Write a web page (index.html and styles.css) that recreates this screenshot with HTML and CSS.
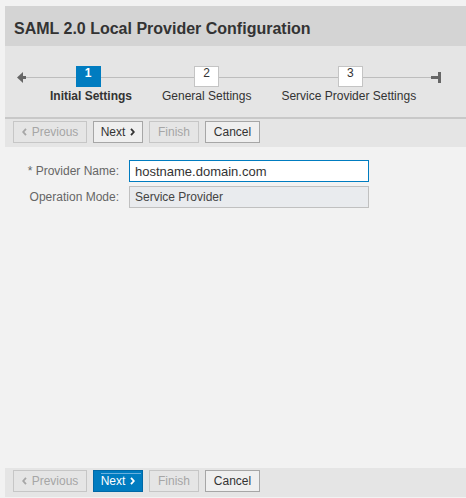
FILE: index.html
```html
<!DOCTYPE html>
<html lang="en">
<head>
<meta charset="utf-8">
<title>SAML 2.0 Local Provider Configuration</title>
<link rel="stylesheet" href="styles.css">
</head>
<body>
<div class="panel">
  <div class="title">SAML 2.0 Local Provider Configuration</div>
  <div class="road">
    <svg class="road-start" width="18" height="11" viewBox="0 0 18 11"><polygon points="0,5.5 6,0 6,11" fill="#666"/><rect x="6" y="4" width="3" height="3" fill="#666"/><rect x="9" y="5" width="9" height="1" fill="#bdbdbd"/></svg>
    <div class="step step-first">
      <div class="step-box current">1</div>
      <div class="step-label current">Initial Settings</div>
    </div>
    <div class="step">
      <div class="step-box">2</div>
      <div class="step-label">General Settings</div>
    </div>
    <div class="step step-last">
      <div class="step-box">3</div>
      <div class="step-label">Service Provider Settings</div>
    </div>
    <svg class="road-end" width="10" height="11" viewBox="0 0 10 11"><rect x="0" y="4" width="7" height="3" fill="#666"/><rect x="7" y="0" width="3" height="11" fill="#666"/></svg>
  </div>
  <div class="toolbar">
    <button class="btn btn-prev" disabled><svg class="chev" width="5" height="8" viewBox="0 0 5 8"><polyline points="4,0.8 1.2,4 4,7.2" fill="none" stroke="currentColor" stroke-width="1.8"/></svg>Previous</button>
    <button class="btn btn-next">Next<svg class="chev" width="5" height="8" viewBox="0 0 5 8"><polyline points="1,0.8 3.8,4 1,7.2" fill="none" stroke="currentColor" stroke-width="1.8"/></svg></button>
    <button class="btn btn-finish" disabled>Finish</button>
    <button class="btn btn-cancel">Cancel</button>
  </div>
  <div class="content">
    <div class="form">
      <label class="form-label" for="pname">* Provider Name:</label>
      <input class="field field-focus" id="pname" type="text" value="hostname.domain.com">
      <span class="form-label">Operation Mode:</span>
      <div class="field field-ro">Service Provider</div>
    </div>
  </div>
  <div class="toolbar toolbar-bottom">
    <button class="btn btn-prev" disabled><svg class="chev" width="5" height="8" viewBox="0 0 5 8"><polyline points="4,0.8 1.2,4 4,7.2" fill="none" stroke="currentColor" stroke-width="1.8"/></svg>Previous</button>
    <button class="btn btn-next btn-primary">Next<svg class="chev" width="5" height="8" viewBox="0 0 5 8"><polyline points="1,0.8 3.8,4 1,7.2" fill="none" stroke="currentColor" stroke-width="1.8"/></svg></button>
    <button class="btn btn-finish" disabled>Finish</button>
    <button class="btn btn-cancel">Cancel</button>
  </div>
</div>
</body>
</html>
```

FILE: styles.css
```css
* { box-sizing: border-box; }
html, body { margin: 0; padding: 0; }
body {
  background: #f2f2f2;
  font-family: "Liberation Sans", Arial, sans-serif;
  font-size: 12px;
  color: #333;
  overflow: hidden;
}
.panel {
  margin: 6px 0 0 5px;
  height: 491px;
  display: flex;
  flex-direction: column;
  background: #f2f2f2;
}
.title {
  height: 40px;
  background: #d4d4d4;
  padding: 5px 0 0 9px;
  line-height: 35px;
  font-size: 16px;
  font-weight: bold;
  color: #333;
  white-space: nowrap;
}
.road {
  height: 73px;
  background: #e5e5e5;
  border-bottom: 2px solid #c8c8c8;
  display: flex;
  align-items: flex-start;
  padding: 20px 0 0 12px;
}
.road-start, .road-end {
  display: block;
  margin-top: 6px;
  flex: none;
}
.step {
  display: flex;
  flex-direction: column;
  align-items: center;
  padding: 0 15px;
  background: linear-gradient(#bdbdbd, #bdbdbd) no-repeat 0 11px / 100% 1px;
}
.step-box {
  width: 25px;
  height: 21px;
  background: #fff;
  border: 1px solid #c4c4c4;
  text-align: center;
  line-height: 13px;
  font-size: 12px;
  color: #333;
}
.step-box.current {
  background: #007cc0;
  border-color: #007cc0;
  color: #fff;
  font-weight: bold;
}
.step-first .step-box { margin-right: 6px; }
.step-last .step-box { margin-left: 3px; }
.step-label {
  margin-top: 2px;
  line-height: 14px;
  white-space: nowrap;
  color: #333;
}
.step-label.current { font-weight: bold; }
.toolbar {
  height: 28px;
  background: #e5e5e5;
  display: flex;
  align-items: flex-start;
  gap: 6px;
  padding: 2px 0 0 8px;
  flex: none;
}
.toolbar-bottom { height: 29px; }
.btn {
  height: 22px;
  margin: 0;
  padding: 0;
  font-family: "Liberation Sans", Arial, sans-serif;
  font-size: 12px;
  line-height: 20px;
  color: #333;
  background: #efefef;
  border: 1px solid #a6a6a6;
  border-radius: 0;
  display: flex;
  align-items: center;
  justify-content: center;
  gap: 5px;
  flex: none;
}
.btn-prev { width: 74px; }
.btn-next { width: 50px; }
.btn-finish { width: 50px; }
.btn-cancel { width: 55px; }
.btn[disabled] {
  color: #a6a6a6;
  background: #e5e5e5;
  border-color: #c6c6c6;
}
.btn-primary {
  background: linear-gradient(#6ab0de, #6ab0de) no-repeat 7px 2px / 40px 1px, #007cc0;
  border-color: #0068a6;
  color: #fff;
}
.chev { display: block; flex: none; }
.content {
  flex: 1;
  background: #f2f2f2;
  padding-top: 13px;
}
.form {
  display: grid;
  grid-template-columns: 114px 240px;
  column-gap: 10px;
  row-gap: 4px;
  align-items: center;
}
.form-label {
  text-align: right;
  color: #666;
  font-size: 12px;
  white-space: nowrap;
}
.field {
  height: 22px;
  margin: 0;
  padding: 0 5px;
  font-family: "Liberation Sans", Arial, sans-serif;
  color: #333;
  border-radius: 0;
  outline: none;
}
.field-focus {
  font-size: 13px;
  background: #fff;
  border: 1px solid #007cc0;
}
.field-ro {
  font-size: 12px;
  line-height: 20px;
  background: #e9ebee;
  border: 1px solid #c0c0c0;
  color: #444;
}
```
